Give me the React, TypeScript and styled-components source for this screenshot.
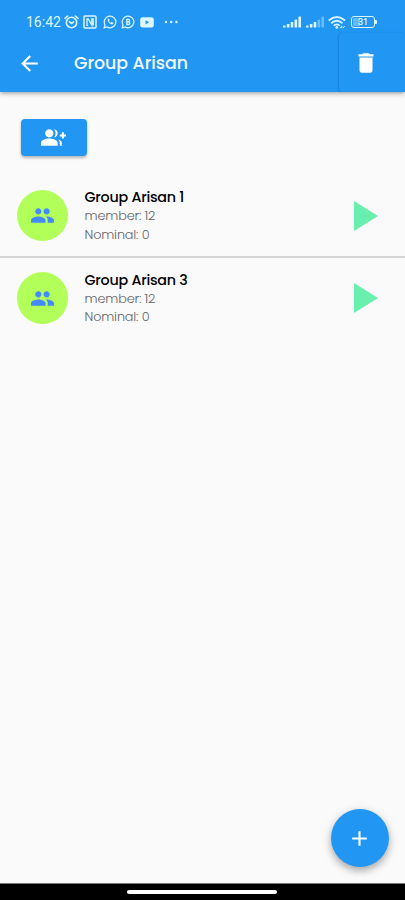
import React from "react";
import styled, { createGlobalStyle } from "styled-components";

const GlobalStyle = createGlobalStyle`
  * { box-sizing: border-box; }
  body { margin: 0; background: #fafafa; }
`;

const Screen = styled.div`
  position: relative;
  width: 405px;
  height: 900px;
  display: flex;
  flex-direction: column;
  overflow: hidden;
  background: #fafafa;
  font-family: Poppins, Inter, "Liberation Sans", sans-serif;
`;

const Header = styled.header`
  height: 92px;
  flex: none;
  display: flex;
  flex-direction: column;
  background: #2196f3;
  box-shadow: 0 1px 5px rgba(0, 0, 0, 0.42);
`;

const StatusBar = styled.div`
  height: 34px;
  padding: 11px 30px 0 26px;
  display: flex;
  justify-content: space-between;
  color: #dcf6ff;
`;

const StatusGroup = styled.div`
  height: 22px;
  display: flex;
  align-items: center;
`;

const Clock = styled.span`
  width: 37px;
  font: 400 14px/22px Roboto, sans-serif;
  white-space: nowrap;
`;

const Glyph = styled.svg<{ $gap?: number }>`
  display: block;
  flex: none;
  margin-left: ${(p) => p.$gap ?? 0}px;
`;

const Toolbar = styled.div`
  flex: 1;
  display: flex;
  align-items: stretch;
`;

const BackButton = styled.button`
  width: 58px;
  padding: 1px 0 0;
  border: 0;
  background: none;
  color: #fff;
  display: grid;
  place-items: center;
`;

const Title = styled.h1`
  flex: 1;
  margin: 0 0 0 16px;
  padding-top: 1px;
  font-size: 17.4px;
  font-weight: 500;
  line-height: 58px;
  letter-spacing: -0.04px;
  color: #f1fbff;
  white-space: nowrap;
`;

const DeleteButton = styled.button`
  width: 66px;
  padding: 0 12px 0 0;
  border: 0;
  border-radius: 4px;
  background: #2196f3;
  color: #fff;
  display: grid;
  place-items: center;
  box-shadow: -1px 0 2px rgba(0, 40, 100, 0.2);
`;

const Content = styled.main`
  flex: 1;
  padding-top: 27px;
`;

const AddMemberButton = styled.button`
  width: 66px;
  height: 37px;
  margin: 0 0 19px 20.5px;
  padding: 0;
  border: 0;
  border-radius: 4px;
  background: #2196f3;
  color: #fff;
  display: grid;
  place-items: center;
  box-shadow: 0 2px 3px rgba(0, 0, 0, 0.28);
`;

const Row = styled.article<{ $divided?: boolean }>`
  height: 82.5px;
  padding: 0.5px 27px 0 16.5px;
  display: flex;
  align-items: center;
  border-bottom: ${(p) => (p.$divided ? "2px solid #d4d4d4" : "2px solid transparent")};
`;

const Avatar = styled.div`
  width: 51.5px;
  height: 51.5px;
  flex: none;
  border-radius: 50%;
  background: #b2ff59;
  color: #448aff;
  display: grid;
  place-items: center;
`;

const Details = styled.div`
  flex: 1;
  margin-left: 16.5px;
  padding-top: 1.6px;
`;

const Name = styled.div`
  font-size: 14.3px;
  font-weight: 500;
  line-height: 18.6px;
  letter-spacing: -0.24px;
  color: #000;
`;

const Meta = styled.div`
  font-size: 12.8px;
  font-weight: 300;
  line-height: 18.6px;
  letter-spacing: -0.15px;
  color: #646464;
`;

const Fab = styled.button`
  position: absolute;
  right: 16px;
  bottom: 33px;
  width: 58px;
  height: 58px;
  padding: 0 1px 0 0;
  border: 0;
  border-radius: 50%;
  background: #2196f3;
  color: #fff;
  display: grid;
  place-items: center;
  box-shadow: 0 4px 7px rgba(0, 0, 0, 0.24), 0 2px 12px rgba(0, 0, 0, 0.12);
`;

const NavigationBar = styled.footer`
  height: 17px;
  flex: none;
  padding-top: 6px;
  display: flex;
  justify-content: center;
  background: #000;
  border-top: 1px solid #777;
`;

const HomeIndicator = styled.div`
  width: 150px;
  height: 4px;
  margin-right: 1px;
  border-radius: 2px;
  background: #fff;
`;

const paths = {
  back: "M20 11H7.83l5.59-5.59L12 4l-8 8 8 8 1.41-1.41L7.83 13H20v-2z",
  trash: "M6 19c0 1.1.9 2 2 2h8c1.1 0 2-.9 2-2V7H6v12zM19 4h-3.5l-1-1h-5l-1 1H5v2h14V4z",
  groupAdd:
    "M22 9V7h-2v2h-2v2h2v2h2v-2h2V9zM8 12c2.21 0 4-1.79 4-4s-1.79-4-4-4-4 1.79-4 4 1.79 4 4 4zM8 13c-2.67 0-8 1.34-8 4v3h16v-3c0-2.66-5.33-4-8-4zM12.51 4.05C13.43 5.11 14 6.49 14 8s-.57 2.89-1.49 3.95C14.47 11.7 16 10.04 16 8s-1.53-3.7-3.49-3.95zM16.53 13.83C17.42 14.66 18 15.7 18 17v3h2v-3c0-1.45-1.59-2.51-3.47-3.17z",
  people:
    "M16 11c1.66 0 2.99-1.34 2.99-3S17.66 5 16 5s-3 1.34-3 3 1.34 3 3 3zm-8 0c1.66 0 2.99-1.34 2.99-3S9.66 5 8 5 5 6.34 5 8s1.34 3 3 3zm0 2c-2.33 0-7 1.17-7 3.5V19h14v-2.5c0-2.33-4.67-3.5-7-3.5zm8 0c-.29 0-.62.02-.97.05 1.16.84 1.97 1.97 1.97 3.45V19h6v-2.5c0-2.33-4.67-3.5-7-3.5z",
  add: "M19 13h-6v6h-2v-6H5v-2h6V5h2v6h6v2z",
};

const Icon = ({ name, size }: { name: keyof typeof paths; size: number }) => (
  <Glyph width={size} height={size} viewBox="0 0 24 24" fill="currentColor">
    <path d={paths[name]} />
  </Glyph>
);

const Signal = ({ active, gap }: { active: number; gap?: number }) => (
  <Glyph $gap={gap} width="18" height="12" viewBox="0 0 18 12" fill="currentColor">
    {[2, 3.5, 5.5, 8, 11].map((h, i) => (
      <rect key={h} x={i * 3.85} y={11.5 - h} width="2.6" height={h} rx="0.6" opacity={i < active ? 1 : 0.4} />
    ))}
  </Glyph>
);

const bubble = "M1.2 12.8 2 9.8A5.8 5.8 0 1 1 4.2 12Z";

const StatusIcons = () => (
  <StatusGroup>
    <Clock>16:42</Clock>
    <Glyph $gap={0.5} width="15" height="14" viewBox="0 0 15 14" fill="none" stroke="currentColor" strokeWidth="1.6" strokeLinecap="round">
      <circle cx="7.5" cy="7.5" r="5.2" />
      <path d="M1 3.3 3.6 1M14 3.3 11.4 1M5.3 6.7 7.5 8.4 9.5 7" />
    </Glyph>
    <Glyph $gap={4.5} width="14" height="14" viewBox="0 0 14 14" fill="none" stroke="currentColor" strokeWidth="1.5">
      <rect x="1" y="1" width="12" height="12" rx="1" />
      <path d="M5.2 10.3H4V3.8h1.2L8.8 10V3.8H10.2v6.7" strokeWidth="1.3" />
    </Glyph>
    <Glyph $gap={5.5} width="14" height="14" viewBox="0 0 14 14" fill="none" stroke="currentColor" strokeWidth="1.25">
      <path d={bubble} />
      <path d="M5 4.2c-.8 2.3 2.4 5.6 4.8 4.9l.4-1.2-1.6-.8-.8.7C6.7 7.3 6 6.5 5.9 5.9l.6-.7-.7-1.4z" fill="currentColor" strokeWidth="0.3" />
    </Glyph>
    <Glyph $gap={4.5} width="14" height="14" viewBox="0 0 14 14" fill="none" stroke="currentColor" strokeWidth="1.25">
      <path d={bubble} />
      <path d="M5.8 4.3v5.2h1.7a1.3 1.3 0 0 0 0-2.6H5.8h1.5a1.3 1.3 0 0 0 0-2.6z" strokeWidth="1.3" />
    </Glyph>
    <Glyph $gap={5} width="14" height="11" viewBox="0 0 14 11">
      <rect x="0.2" y="0.3" width="13.6" height="10.2" rx="2.5" fill="currentColor" />
      <path d="M5.5 3.2v4.2l3.6-2.1z" fill="#2196f3" />
    </Glyph>
    <Glyph $gap={9.5} width="15" height="4" viewBox="0 0 15 4" fill="currentColor">
      <circle cx="2" cy="2" r="1.2" />
      <circle cx="7.2" cy="2" r="1.2" />
      <circle cx="12.4" cy="2" r="1.2" />
    </Glyph>
  </StatusGroup>
);

const BatteryShell = styled.div`
  position: relative;
  width: 24px;
  height: 12px;
  margin-left: 5px;
  border: 1px solid currentColor;
  border-radius: 3px;
  background: linear-gradient(90deg, #67b9f7 0 36%, transparent 36%);
  background-clip: content-box;
  padding: 1px;
  font: 500 9px/9px Roboto, sans-serif;
  text-align: center;
  &::after {
    content: "";
    position: absolute;
    right: -3px;
    top: 3px;
    width: 2px;
    height: 4px;
    border-radius: 0 1px 1px 0;
    background: currentColor;
  }
`;

const Connectivity = () => (
  <StatusGroup>
    <Signal active={5} />
    <Signal active={3} gap={5} />
    <Glyph $gap={4.5} width="18" height="13" viewBox="0 0 18 13" fill="none" stroke="currentColor" strokeWidth="1.8">
      <path d="M.7 4.5Q8.8-2.4 17 4.5M3.3 7.2Q8.8 2.4 14.4 7.2M5.8 9.7Q8.8 7 11.8 9.7" />
      <circle cx="8.8" cy="11.4" r="1.4" fill="currentColor" stroke="none" />
      <path d="M12.3 12.2l1.5-2.1v2.1M15 12.2l1.7-2.2" strokeWidth="1" />
    </Glyph>
    <BatteryShell>31</BatteryShell>
  </StatusGroup>
);

const groups = [
  { name: "Group Arisan 1", member: 12, nominal: 0 },
  { name: "Group Arisan 3", member: 12, nominal: 0 },
];

export default function App() {
  return (
    <Screen>
      <GlobalStyle />
      <Header>
        <StatusBar>
          <StatusIcons />
          <Connectivity />
        </StatusBar>
        <Toolbar>
          <BackButton aria-label="Back"><Icon name="back" size={25} /></BackButton>
          <Title>Group Arisan</Title>
          <DeleteButton aria-label="Delete"><Icon name="trash" size={26} /></DeleteButton>
        </Toolbar>
      </Header>
      <Content>
        <AddMemberButton aria-label="Add member"><Icon name="groupAdd" size={25} /></AddMemberButton>
        {groups.map((g, i) => (
          <Row key={g.name} $divided={i < groups.length - 1}>
            <Avatar><Icon name="people" size={25} /></Avatar>
            <Details>
              <Name>{g.name}</Name>
              <Meta>member: {g.member}</Meta>
              <Meta>Nominal: {g.nominal}</Meta>
            </Details>
            <Glyph width="24" height="30" viewBox="0 0 24 30" fill="#69f0ae">
              <path d="M0 0v30l24-15z" />
            </Glyph>
          </Row>
        ))}
      </Content>
      <Fab aria-label="Add group"><Icon name="add" size={25} /></Fab>
      <NavigationBar><HomeIndicator /></NavigationBar>
    </Screen>
  );
}
